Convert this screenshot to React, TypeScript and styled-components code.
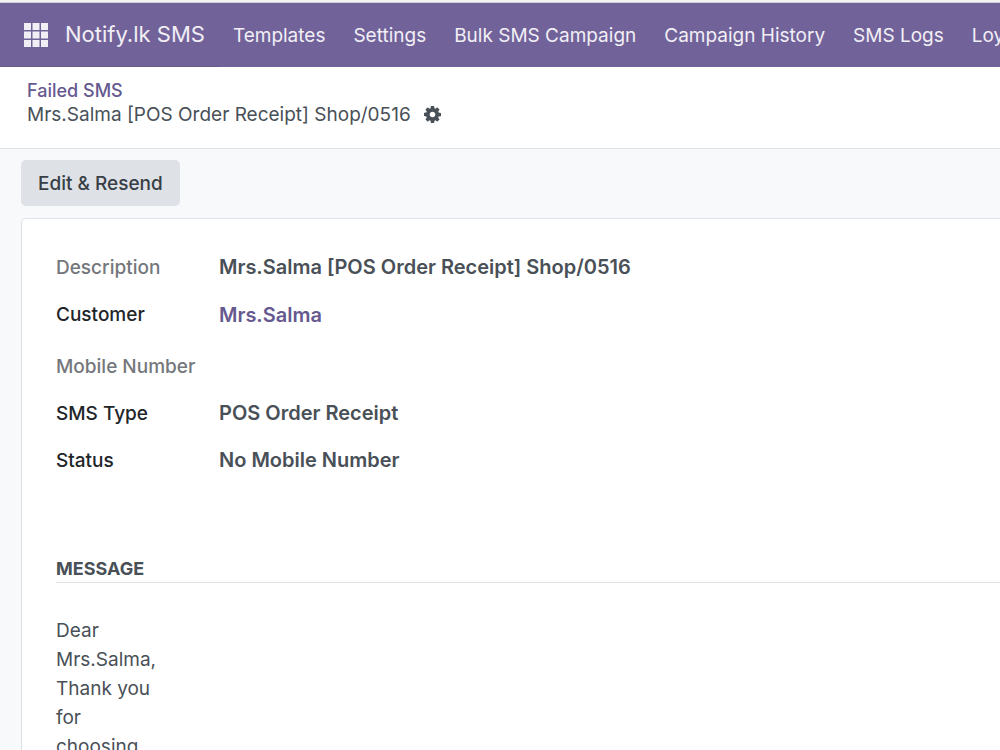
import React from "react";
import styled, { createGlobalStyle } from "styled-components";

const GlobalStyle = createGlobalStyle`
  * { box-sizing: border-box; }
  html, body, #root { height: 100%; }
  body {
    margin: 0;
    overflow: hidden;
    background: #f8f9fb;
    color: #495057;
    font-family: Inter, "Liberation Sans", sans-serif;
    font-size: 19px;
    line-height: 29px;
  }
`;

const Page = styled.div`
  display: flex;
  flex-direction: column;
  min-height: 100%;
`;

const TopEdge = styled.div`
  height: 3px;
  border-bottom: 1px solid #d2d0d8;
  background: #f3f3f3;
  flex-shrink: 0;
`;

const Navbar = styled.nav`
  display: flex;
  align-items: stretch;
  height: 64px;
  background: #71639a;
  overflow: hidden;
  white-space: nowrap;
  flex-shrink: 0;
`;

const BrandArea = styled.div`
  display: flex;
  align-items: center;
  gap: 17px;
  padding: 0 14px 0 24px;
  border-bottom: 1px solid #675a8e;
`;

const AppsButton = styled.button`
  display: flex;
  padding: 0;
  border: 0;
  background: none;
  color: #f1eff5;
`;

const Brand = styled.a`
  color: #f1eff5;
  font-size: 22px;
  text-decoration: none;
`;

const Menu = styled.div`
  display: flex;
  align-items: center;
  gap: 28px;
  padding-left: 14px;
`;

const MenuLink = styled.a`
  color: #f1eff5;
  text-decoration: none;
`;

const ControlPanel = styled.header`
  height: 82px;
  padding: 11px 27px;
  border-bottom: 1px solid #dee2e6;
  background: #fff;
  line-height: 24px;
  flex-shrink: 0;
`;

const Breadcrumb = styled.a`
  display: block;
  width: fit-content;
  color: #66598f;
  font-size: 18px;
  font-weight: 500;
  line-height: 25px;
  text-decoration: none;
`;

const TitleRow = styled.div`
  display: flex;
  align-items: center;
  gap: 13px;
`;

const Title = styled.h1`
  margin: 0;
  font-size: 19px;
  font-weight: 400;
`;

const GearButton = styled.button`
  display: flex;
  padding: 0 0 2px;
  border: 0;
  background: none;
  color: #495057;
`;

const StatusBar = styled.div`
  padding: 11px 21px 12px;
`;

const ActionButton = styled.button`
  height: 46px;
  padding: 0 17px;
  border: 0;
  border-radius: 5px;
  background: #dee2e6;
  color: #383e45;
  font: inherit;
  font-weight: 500;
`;

const Sheet = styled.main`
  flex: 1 0 auto;
  margin-left: 21px;
  padding: 34px 0 0 34px;
  border: 1px solid #dee2e6;
  border-width: 1px 0 0 1px;
  border-top-left-radius: 5px;
  background: #fff;
`;

const Fields = styled.dl`
  display: grid;
  grid-template-columns: 163px 1fr;
  row-gap: 18px;
  margin: 0;
`;

const Label = styled.dt<{ $muted?: boolean }>`
  color: ${(p) => (p.$muted ? "#74777b" : "#212529")};
  font-weight: 500;
`;

const Value = styled.dd<{ $link?: boolean }>`
  margin: 0;
  padding: ${(p) => (p.$link ? "1px 0 4px" : "0")};
  font-size: 20px;
  font-weight: 600;
`;

const RecordLink = styled.a`
  color: #66598f;
  text-decoration: none;
`;

const SectionTitle = styled.h2`
  margin: 81px 0 33px;
  border-bottom: 1px solid #dee2e6;
  font-size: 18px;
  font-weight: 700;
  line-height: 26px;
  text-transform: uppercase;
`;

const Message = styled.p`
  width: 110px;
  margin: 0;
`;

const AppsIcon = () => (
  <svg width="24" height="24" viewBox="0 0 24 24" fill="currentColor" aria-hidden="true">
    {[0, 8.5, 17].map((y) =>
      [0, 8.5, 17].map((x) => <rect key={`${x}-${y}`} x={x} y={y} width="7" height="7" />)
    )}
  </svg>
);

const GearIcon = () => (
  <svg width="17" height="17" viewBox="128 128 1536 1536" fill="currentColor" aria-hidden="true">
    <path d="M1152 896q0-106-75-181t-181-75-181 75-75 181 75 181 181 75 181-75 75-181zm512-109v222q0 12-8 23t-20 13l-185 28q-19 54-39 91 35 50 107 138 10 12 10 25t-9 23q-27 37-99 108t-94 71q-12 0-26-9l-138-108q-44 23-91 38-16 136-29 186-7 28-36 28h-222q-14 0-24.500-8.500t-11.500-21.500l-28-184q-49-16-90-37l-141 107q-10 9-25 9-14 0-25-11-126-114-165-168-7-10-7-23 0-12 8-23 15-21 51-66.500t54-70.500q-27-50-41-99l-183-27q-13-2-21-12.500t-8-23.500v-222q0-12 8-23t19-13l186-28q14-46 39-92-40-57-107-138-10-12-10-24 0-10 9-23 26-36 98.500-107.500t94.500-71.500q13 0 26 10l138 107q44-23 91-38 16-136 29-186 7-28 36-28h222q14 0 24.500 8.500t11.500 21.500l28 184q49 16 90 37l142-107q9-9 24-9 13 0 25 10 129 119 165 170 7 8 7 22 0 12-8 23-15 21-51 66.500t-54 70.500q26 50 41 98l183 28q13 2 21 12.500t8 23.500z" />
  </svg>
);

const menuItems = ["Templates", "Settings", "Bulk SMS Campaign", "Campaign History", "SMS Logs", "Loyalty"];

const fields = [
  { label: "Description", value: "Mrs.Salma [POS Order Receipt] Shop/0516", muted: true },
  { label: "Customer", value: "Mrs.Salma", link: true },
  { label: "Mobile Number", value: "", muted: true },
  { label: "SMS Type", value: "POS Order Receipt" },
  { label: "Status", value: "No Mobile Number" },
];

export default function App() {
  return (
    <Page>
      <GlobalStyle />
      <TopEdge />
      <Navbar>
        <BrandArea>
          <AppsButton aria-label="Apps"><AppsIcon /></AppsButton>
          <Brand href="#">Notify.lk SMS</Brand>
        </BrandArea>
        <Menu>
          {menuItems.map((item) => <MenuLink key={item} href="#">{item}</MenuLink>)}
        </Menu>
      </Navbar>
      <ControlPanel>
        <Breadcrumb href="#">Failed SMS</Breadcrumb>
        <TitleRow>
          <Title>Mrs.Salma [POS Order Receipt] Shop/0516</Title>
          <GearButton aria-label="Actions"><GearIcon /></GearButton>
        </TitleRow>
      </ControlPanel>
      <StatusBar>
        <ActionButton>Edit &amp; Resend</ActionButton>
      </StatusBar>
      <Sheet>
        <Fields>
          {fields.map((f) => (
            <React.Fragment key={f.label}>
              <Label $muted={f.muted}>{f.label}</Label>
              <Value $link={f.link}>{f.link ? <RecordLink href="#">{f.value}</RecordLink> : f.value}</Value>
            </React.Fragment>
          ))}
        </Fields>
        <SectionTitle>Message</SectionTitle>
        <Message>Dear Mrs.Salma, Thank you for choosing</Message>
      </Sheet>
    </Page>
  );
}
